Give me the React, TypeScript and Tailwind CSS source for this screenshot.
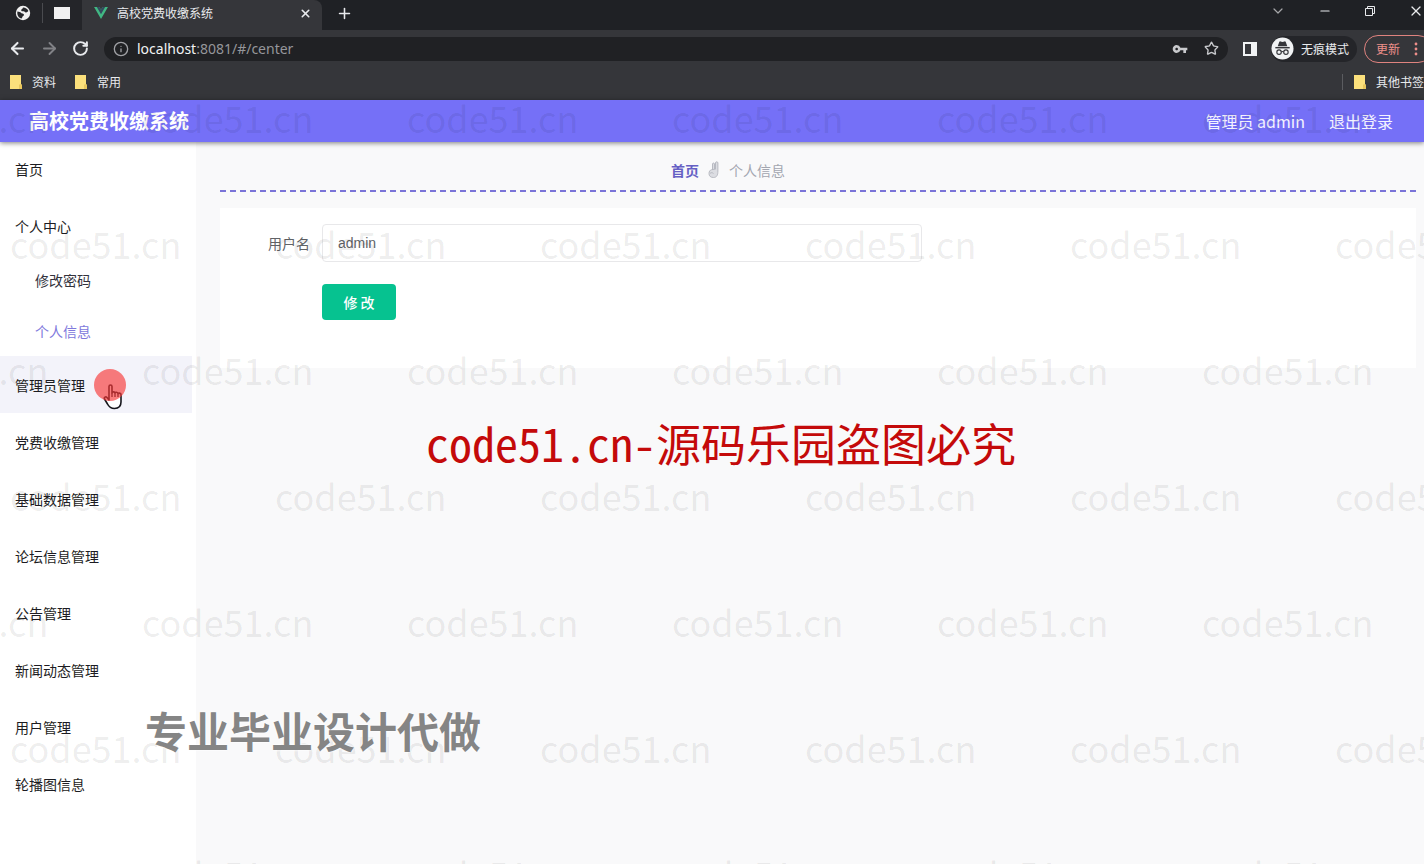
import type { ReactNode } from "react";
import { ArrowLeft, ArrowRight, ChevronDown, Info, Minus, Plus, RotateCw, Star, X } from "lucide-react";
import { MdVpnKey } from "react-icons/md";
import { twMerge } from "tailwind-merge";

type MenuEntry = {
	label: string;
	children?: { label: string; active?: boolean }[];
	hovered?: boolean;
};

const menu: MenuEntry[] = [
	{ label: "首页" },
	{
		label: "个人中心",
		children: [{ label: "修改密码" }, { label: "个人信息", active: true }],
	},
	{ label: "管理员管理", hovered: true },
	{ label: "党费收缴管理" },
	{ label: "基础数据管理" },
	{ label: "论坛信息管理" },
	{ label: "公告管理" },
	{ label: "新闻动态管理" },
	{ label: "用户管理" },
	{ label: "轮播图信息" },
];

const VueLogo = () => (
	<svg viewBox="0 0 256 221" className="w-[14px] h-[12px]" aria-hidden="true">
		<path d="M204.8 0H256L128 220.8 0 0h97.9L128 51.2 157.4 0h47.4z" fill="#41B883" />
		<path d="M50.6 0L128 133.1 204.8 0h-47.4L128 51.2 97.3 0H50.6z" fill="#35495E" />
	</svg>
);

const GlobeLogo = () => (
	<svg viewBox="0 0 16 16" className="w-4 h-4" aria-hidden="true">
		<circle cx="8" cy="8" r="7.2" fill="#f1f1f1" />
		<path d="M2.400 6.400c2 .2 2.600.4 3.800 1.600.8.8 2.600.2 2.800 1.800.1 1.200-1.600 1-1.800 2.600l-.6 1.200C3.800 13 1.800 10.200 2.400 6.400z" fill="#26272b" />
		<path d="M8 2.400c2.400 0 4.600 1.400 5.400 3.600-1 .6-1.400 1.600-2.600 1.400-1-.2-1.200-1-2.200-1.200-1-.2-2.400.2-2.400-1C6.200 3.800 7.800 4 8 2.400z" fill="#26272b" />
	</svg>
);

const IncognitoLogo = () => (
	<svg viewBox="0 0 24 24" className="w-[23px] h-[23px]" aria-hidden="true">
		<circle cx="12" cy="12" r="11.5" fill="#f1f3f4" />
		<path d="M8.600 5.200c.2-.6.8-.8 1.300-.6l2.100.7 2.100-.7c.5-.2 1.100 0 1.300.6L17 9.600H7l1.600-4.400z" fill="#35363a" />
		<rect x="4.5" y="10.4" width="15" height="1.5" fill="#35363a" />
		<g fill="none" stroke="#35363a" strokeWidth="1.2">
			<circle cx="8.400" cy="15.8" r="2.3" />
			<circle cx="15.6" cy="15.8" r="2.3" />
			<path d="M10.7 15.600c.8-.6 1.800-.6 2.600 0" />
		</g>
	</svg>
);

const FolderIcon = () => (
	<svg viewBox="0 0 12 14" className="w-3 h-[14px]" aria-hidden="true">
		<path d="M0 0h11v9l1 1v4H0z" fill="#fbe07c" />
		<path d="M9 14v-4l1-1 2 1v4z" fill="#e8c65c" />
	</svg>
);

const PointerHand = () => (
	<svg viewBox="0 0 20 26" className="absolute left-[103px] top-7 w-5 h-[26px]" aria-hidden="true">
		<path
			d="M6 16V2.500c0-2 3-2 3 0V9c0-1.500 3-1.500 3 .3 0-1.500 3-1.300 3 .5 0-1.200 3-1 3 .8V18c0 4-2 6.500-6.500 6.500C7 24.500 5.500 22 4.500 20L1.500 15c-.8-1.800 1.200-2.800 2.500-1.500z"
			fill="#fff"
			stroke="#16161c"
			strokeWidth="1.6"
			strokeLinejoin="round"
		/>
		<path d="M9 9v4M12 9.500V13M15 10v3" stroke="#16161c" strokeWidth="1.3" />
	</svg>
);

const HandIcon = () => (
	<svg viewBox="0 0 14 18" className="w-[14px] h-[18px]" aria-hidden="true">
		<g fill="#dcdde2" stroke="#b2b4bc" strokeWidth="0.9" strokeLinejoin="round">
			<path d="M5.500 9V3c0-1.300 2-1.300 2 0v5" />
			<path d="M8.500 8.500V1.800c0-1.300 2.400-1.300 2.400 0V10c0 4-1 6.500-4.500 6.500C3.500 16.500 2 15 2 12.500c0-2 1-3.500 2.600-3.800l3.400-.5" />
			<path d="M3 12.500c1-1.200 2.500-1 3.500 0" />
		</g>
	</svg>
);

const Bookmark = ({ label }: { label: string }) => (
	<button type="button" className="flex items-center gap-[10px] whitespace-nowrap">
		<FolderIcon />
		{label}
	</button>
);

const IconButton = ({ label, className = "", children }: { label: string; className?: string; children: ReactNode }) => (
	<button type="button" aria-label={label} className={twMerge("flex shrink-0 items-center justify-center", className)}>
		{children}
	</button>
);

const BrowserChrome = () => (
	<div className="overflow-hidden bg-[#35363a] text-xs text-[#e8eaed]">
		<div className="flex h-[30px] items-center bg-[#1f2125]">
			<div className="flex h-full w-[82px] items-center bg-[#242529] pb-1 pl-[15px]">
				<GlobeLogo />
				<span className="ml-[11px] h-5 w-px bg-[#4a4b4f]" />
				<span className="ml-[11px] h-3 w-4 bg-[#f1f1f1]" />
			</div>
			<div className="flex h-full w-60 items-center rounded-tr-lg bg-[#35363a] pb-1 pl-3 pr-[10px]">
				<VueLogo />
				<span className="ml-[9px] flex-1">高校党费收缴系统</span>
				<IconButton label="关闭标签页">
					<X size={13} strokeWidth={3} />
				</IconButton>
			</div>
			<IconButton label="新建标签页" className="ml-[14px] pb-1">
				<Plus size={17} strokeWidth={2.2} />
			</IconButton>
			<div className="ml-auto flex items-center gap-8 pb-2">
				<IconButton label="搜索标签页" className="text-[#a5a6a9]">
					<ChevronDown size={16} strokeWidth={1.8} />
				</IconButton>
				<IconButton label="最小化">
					<Minus size={14} strokeWidth={2} />
				</IconButton>
				<IconButton label="还原">
					<svg viewBox="0 0 12 12" className="w-3 h-3" fill="none" stroke="currentColor">
						<path d="M1.500 3.500h7v7h-7zM3.500 3.500v-2h7v7h-2" />
					</svg>
				</IconButton>
				<IconButton label="关闭">
					<X size={16} strokeWidth={1.8} />
				</IconButton>
			</div>
		</div>

		<div className="flex h-[37px] items-center pl-2">
			<IconButton label="后退">
				<ArrowLeft size={19} strokeWidth={2.6} />
			</IconButton>
			<IconButton label="前进" className="ml-[13px] text-[#818286]">
				<ArrowRight size={19} strokeWidth={2.4} />
			</IconButton>
			<IconButton label="刷新" className="ml-[13px]">
				<RotateCw size={17} strokeWidth={2.8} />
			</IconButton>
			<div className="ml-[15px] flex h-6 flex-1 items-center rounded-full bg-[#202124] px-[9px]">
				<Info size={16} strokeWidth={2} className="text-[#a0a1a5]" />
				<span className="ml-2 flex-1 font-['Noto_Sans',sans-serif] text-sm text-[#95969a]">
					<span className="text-[#f1f3f4]">localhost</span>:8081/#/center
				</span>
				<IconButton label="密码">
					<MdVpnKey size={16} className="text-[#c8c9cc]" />
				</IconButton>
				<IconButton label="添加书签" className="ml-4">
					<Star size={15} strokeWidth={2.2} className="text-[#c8c9cc]" />
				</IconButton>
			</div>
			<IconButton label="侧边栏" className="ml-[15px]">
				<svg viewBox="0 0 14 14" className="w-[14px] h-[14px]">
					<path d="M0 0h14v14H0zM2 2v10h6V2z" fill="#f1f3f4" fillRule="evenodd" />
				</svg>
			</IconButton>
			<div className="ml-[14px] flex h-[26px] items-center gap-[7px] rounded-full bg-[#242529] pr-2">
				<IncognitoLogo />
				无痕模式
			</div>
			<button
				type="button"
				className="-mr-2 ml-[7px] flex h-7 w-[68px] items-center gap-[14px] whitespace-nowrap rounded-full border border-[#e0837f] pl-[11px] text-[#ee8f8a]"
			>
				更新
				<svg viewBox="0 0 4 14" className="w-1 h-[14px]" fill="currentColor">
					<circle cx="2" cy="2" r="1.4" />
					<circle cx="2" cy="7" r="1.4" />
					<circle cx="2" cy="12" r="1.4" />
				</svg>
			</button>
		</div>

		<div className="flex h-[33px] items-center gap-[19px] pb-1 pl-[10px]">
			<Bookmark label="资料" />
			<Bookmark label="常用" />
			<div className="ml-auto flex items-center gap-[11px]">
				<span className="h-4 w-px bg-[#5b5c60]" />
				<Bookmark label="其他书签" />
			</div>
		</div>
	</div>
);

const Header = () => (
	<header className="relative flex h-[42px] items-center bg-[#7570f7] pl-[29px] pr-[31px] text-base text-[#f4f3ff] shadow-[0_1px_5px_rgba(0,0,0,0.5)]">
		<h1 className="flex-1 text-xl font-bold text-white">高校党费收缴系统</h1>
		<span>管理员 admin</span>
		<a href="#/login" className="ml-6">
			退出登录
		</a>
	</header>
);

const Sidebar = () => (
	<nav className="-mt-0.5 w-[196px] shrink-0 bg-white text-sm text-[#1c1c22]">
		{menu.map((entry) => (
			<div key={entry.label} className="relative">
				<a
					href="#/center"
					className={twMerge("flex h-[57px] items-center pl-[15px]", entry.hovered && "mr-1 bg-[#f3f3fa]")}
				>
					{entry.label}
				</a>
				{entry.hovered && (
					<>
						<PointerHand />
						<span className="absolute left-[94px] top-[13px] h-8 w-8 rounded-full bg-[#f83838]/65" />
					</>
				)}
				{entry.children?.map((child) => (
					<a
						key={child.label}
						href="#/center"
						className={twMerge("flex h-[51px] items-center pl-[35px] text-[#33333d]", child.active && "text-[#8079dc]")}
					>
						{child.label}
					</a>
				))}
			</div>
		))}
	</nav>
);

const Center = () => (
	<main className="flex-1 bg-[#f9f9fa] pl-6 pr-2 pt-2 text-sm">
		<div className="flex h-[42px] items-center justify-center gap-2 border-b-2 border-dashed border-[#7a74d8] pr-[180px]">
			<a href="#/" className="font-bold text-[#6660c4]">
				首页
			</a>
			<HandIcon />
			<span className="text-[#a3a6b0]">个人信息</span>
		</div>
		<form className="mt-4 bg-white pb-12 pl-12 pt-4">
			<div className="flex items-center gap-3">
				<label htmlFor="username" className="text-[#606266]">
					用户名
				</label>
				<input
					id="username"
					defaultValue="admin"
					className="h-[38px] w-[600px] rounded-sm border border-[#e8e8ea] bg-white px-[15px] font-['Liberation_Sans',sans-serif] text-[#606266]"
				/>
			</div>
			<button type="button" className="ml-[54px] mt-[22px] block h-9 w-[74px] rounded bg-[#06c290] font-medium text-white">
				修 改
			</button>
		</form>
	</main>
);

const Watermark = () => (
	<div className="pointer-events-none absolute inset-0 overflow-hidden pt-[54px]" aria-hidden="true">
		{[0, 1, 2, 3, 4, 5, 6].map((row) => (
			<div
				key={row}
				className={twMerge(
					"flex h-[126px] items-center text-4xl text-black/8",
					row % 2 ? "ml-[10px]" : "-ml-[123px]",
				)}
			>
				{[0, 1, 2, 3, 4, 5].map((col) => (
					<span key={col} className="w-[265px] shrink-0">
						code51.cn
					</span>
				))}
			</div>
		))}
	</div>
);

export default function App() {
	return (
		<div className="relative flex min-h-screen flex-col overflow-hidden font-['Noto_Sans_CJK_SC',sans-serif]">
			<BrowserChrome />
			<Header />
			<div className="flex flex-1">
				<Sidebar />
				<Center />
			</div>
			<Watermark />
			<p className="pointer-events-none absolute left-[426px] top-[409px] whitespace-nowrap text-[45px] leading-[66px] text-[#c40a0a] [font-feature-settings:'hwid']">
				<span className="text-[46px]">code51.cn-</span>源码乐园盗图必究
			</p>
			<p className="pointer-events-none absolute left-[145px] top-[700px] whitespace-nowrap text-[42px] font-bold leading-[60px] text-[#858585] [text-shadow:0_0_2px_#fff,0_0_3px_#fff]">
				专业毕业设计代做
			</p>
		</div>
	);
}
